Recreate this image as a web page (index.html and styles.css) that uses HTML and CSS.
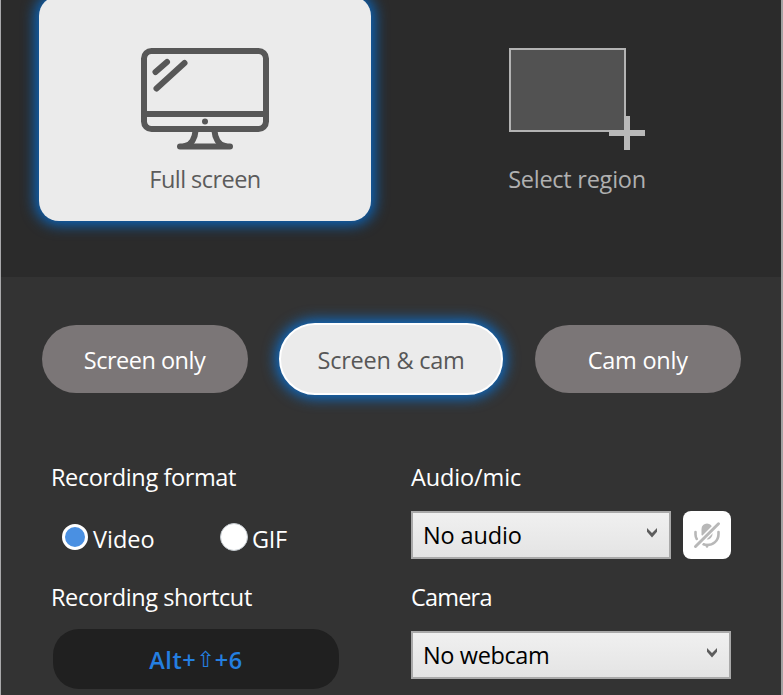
FILE: index.html
```
<!DOCTYPE html>
<html lang="en">
<head>
<meta charset="utf-8">
<title>Recorder</title>
<link rel="stylesheet" href="styles.css">
</head>
<body>
<div class="window">
  <section class="area">
    <div class="card card-on">
      <svg class="art" width="130" height="104" viewBox="0 0 130 104" fill="none" stroke="#575757" stroke-width="6" stroke-linecap="round">
        <rect x="4" y="4" width="122" height="78" rx="7.5"/>
        <path d="M4 67H126" stroke-width="6"/>
        <path d="M15.500 25L27 15M16.500 41.500L44.500 16M40 99.500H90"/>
        <path d="M55.500 84C55 91 51.500 98 45 99M74.500 84C75 91 78.500 98 85 99"/>
        <circle cx="65" cy="74.500" r="3" fill="#575757" stroke="none"/>
      </svg>
      <span class="t-full">Full screen</span>
    </div>
    <div class="card card-off">
      <svg class="art" width="138" height="104" viewBox="0 0 138 104">
        <rect x="2" y="2" width="115" height="82" fill="#525252" stroke="#b3b3b3" stroke-width="2"/>
        <path d="M101 83H137V89H101ZM116 69H122V103H116Z" fill="#b9b9b9"/>
      </svg>
      <span class="t-region">Select region</span>
    </div>
  </section>
  <section class="modes">
    <div class="pill"><span class="t-only">Screen only</span></div>
    <div class="pill pill-on"><span class="t-both">Screen &amp; cam</span></div>
    <div class="pill"><span class="t-cam">Cam only</span></div>
  </section>
  <section class="settings">
    <div class="col">
      <div class="label"><span class="t-format">Recording format</span></div>
      <div class="radios">
        <div class="radio"><i class="dot dot-on"></i><span class="t-video">Video</span></div>
        <div class="radio"><i class="dot"></i><span class="t-gif">GIF</span></div>
      </div>
      <div class="label"><span class="t-shortcut">Recording shortcut</span></div>
      <div class="shortcut"><span class="t-key">Alt+</span><span class="shift">⇧</span><span class="t-key">+6</span></div>
    </div>
    <div class="col">
      <div class="label"><span class="t-audio">Audio/mic</span></div>
      <div class="row">
        <div class="select"><span class="t-noaudio">No audio</span>
          <svg width="12" height="11" viewBox="0 0 12 11"><path d="M1 0L6 5L11 0V3.800L6 9.500L1 3.800Z" fill="#5d5d5d"/></svg></div>
        <div class="mic">
          <svg width="28" height="28" viewBox="0 0 28 28" fill="none" stroke="#b8b8b8" stroke-width="2.600" stroke-linecap="round">
            <path d="M8.500 14V8a5.500 5.500 0 0 1 11 0V13a5.500 5.500 0 0 1-5.500 5.500Z" fill="#b8b8b8" stroke="none"/>
            <path d="M2.500 11V13.500Q2.500 16 3.800 18M25.500 11V13C25.500 20 20 24 14 24Q12 24 10.500 23.300"/>
            <path d="M14 24V25.500"/>
            <path d="M2 26L26 2" stroke="#fff" stroke-width="5.600"/>
            <path d="M2.500 25.500L25.500 2.800" stroke-width="3"/>
          </svg>
        </div>
      </div>
      <div class="label"><span class="t-camera">Camera</span></div>
      <div class="row">
        <div class="select"><span class="t-nowebcam">No webcam</span>
          <svg width="12" height="11" viewBox="0 0 12 11"><path d="M1 0L6 5L11 0V3.800L6 9.500L1 3.800Z" fill="#5d5d5d"/></svg></div>
      </div>
    </div>
  </section>
</div>
</body>
</html>
```
FILE: styles.css
```
* { box-sizing: border-box; }
body {
  margin: 0;
  height: 695px;
  overflow: hidden;
  background: #333;
  color: #fff;
  font: 23.5px/32px "Open Sans", "Noto Sans", sans-serif;
}
span { white-space: nowrap; }
svg { display: block; flex: none; }
.window {
  height: 695px;
  overflow: hidden;
  border-left: 1px solid #a9a9ab;
  border-right: 2px solid #a3a3a3;
}
.area {
  display: flex;
  gap: 38px;
  height: 277px;
  padding-left: 38px;
  background: #2b2b2b;
}
.card {
  display: flex;
  flex-direction: column;
  align-items: center;
  width: 332px;
  height: 225px;
  margin-top: -4px;
  padding-top: 51px;
  border-radius: 20px;
}
.card-on {
  background: #ebebeb;
  color: #5b5b5b;
  box-shadow: 0 0 14px 4px #0b66bd;
}
.card-off { color: #b0b0b0; padding-left: 4px; }
.art { margin-bottom: 12px; }
.modes {
  display: flex;
  align-items: center;
  justify-content: space-between;
  height: 164px;
  padding: 0 40.3px 0 40.5px;
}
.pill {
  display: flex;
  align-items: center;
  justify-content: center;
  width: 206px;
  height: 68px;
  padding-top: 2px;
  border-radius: 34px;
  background: #7b7677;
}
.pill-on {
  width: 224px;
  height: 72px;
  border: 2px solid #fff;
  border-radius: 36px;
  background: #ebebeb;
  color: #575757;
  box-shadow: 0 0 14px 3px #0b70d0;
}
.settings { display: flex; padding: 19px 0 0 50px; }
.col { width: 360px; }
.label { height: 51px; padding-top: 1px; }
.radios { display: flex; height: 69px; }
.radio { display: flex; width: 158px; height: 54px; padding: 0 0 0 11px; align-items: center; gap: 5px; }
.radio span { padding-top: 1px; }
.radio + .radio { gap: 4px; }
.dot {
  width: 28px;
  height: 28px;
  margin-top: -2px;
  border-radius: 50%;
  background: #fff;
  border: 1px solid #c3c9ce;
}
.dot-on { width: 26px; height: 26px; border: 3px solid #fff; background: #4a90e2; }
.shortcut {
  display: flex;
  align-items: center;
  justify-content: center;
  width: 286px;
  height: 60px;
  margin: -2px 0 0 2px;
  padding-top: 2px;
  border-radius: 26px;
  background: #202020;
  color: #247fe0;
  font-weight: 600;
}
.shift { font: 22px/32px "DejaVu Sans", sans-serif; }
.row { display: flex; gap: 12px; width: 320px; height: 69px; }
.select {
  display: flex;
  flex: 1;
  align-items: center;
  justify-content: space-between;
  height: 48px;
  padding: 0 11px 1px 10px;
  border: 2px solid #a9a9a9;
  background: linear-gradient(#f0f0f0, #e4e4e4);
  color: #000;
}
.select svg { margin-top: -2px; }
.mic {
  display: flex;
  align-items: center;
  justify-content: center;
  width: 48px;
  height: 48px;
  border-radius: 8px;
  background: #fff;
}
.t-full { letter-spacing: -0.55px; }
.t-region { letter-spacing: -0.25px; }
.t-only { letter-spacing: -0.5px; }
.t-both { letter-spacing: -0.25px; }
.t-cam { letter-spacing: -0.25px; }
.t-format { letter-spacing: -0.38px; }
.t-shortcut { letter-spacing: -0.4px; }
.t-audio { letter-spacing: -0.12px; }
.t-noaudio { letter-spacing: -0.15px; }
.t-camera { letter-spacing: -0.8px; }
.t-nowebcam { letter-spacing: -0.38px; }
.t-gif { letter-spacing: -0.3px; }
.t-key { letter-spacing: 0.6px; }
```
